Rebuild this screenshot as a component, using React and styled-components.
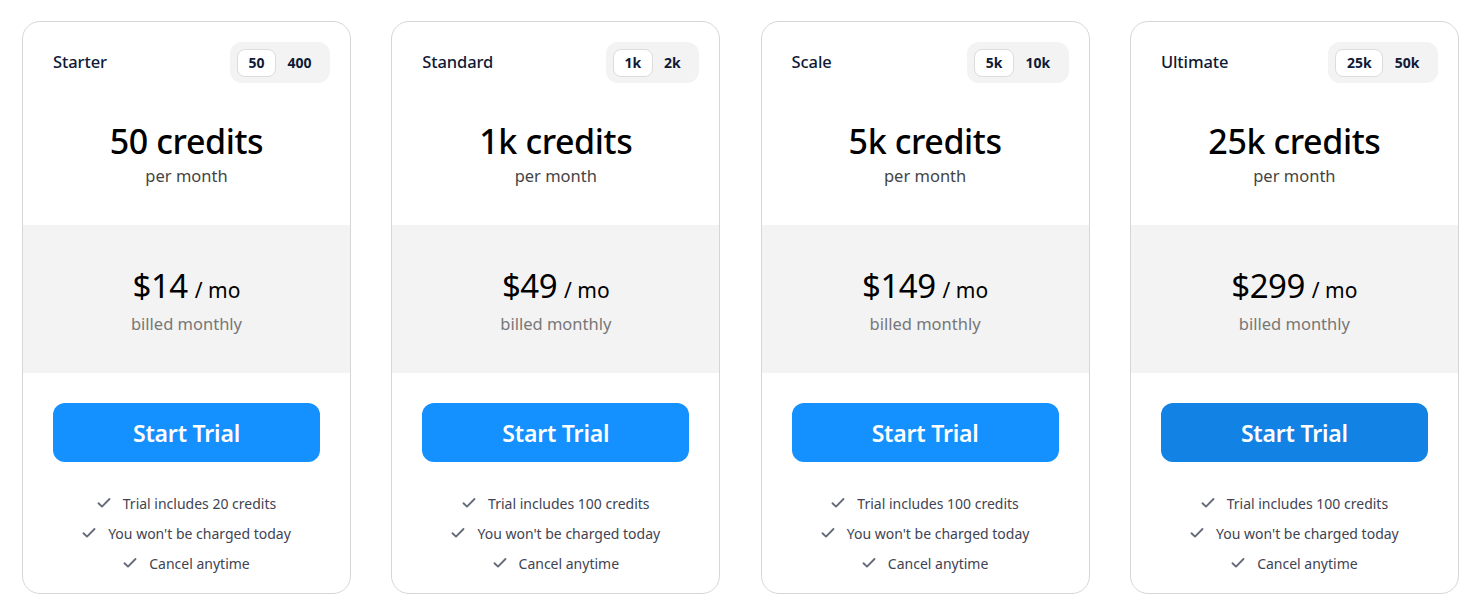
import React, { useState } from "react";
import styled, { createGlobalStyle } from "styled-components";

const Global = createGlobalStyle`
  html, body { margin: 0; padding: 0; background: #ffffff; }
  body { font-family: "Noto Sans", "Open Sans", sans-serif; }
  * { box-sizing: border-box; }
`;

const Page = styled.div`
  display: grid;
  grid-template-columns: repeat(4, 329px);
  column-gap: 40.3px;
  padding: 21px 0 0 22px;
`;

const Card = styled.div`
  border: 1px solid #d6d6d6;
  border-radius: 18px;
  overflow: hidden;
  background: #fff;
  display: flex;
  flex-direction: column;
  height: 573px;
`;

const Top = styled.div`
  padding: 20px 20px 37px 30px;
  display: flex;
  flex-direction: column;
`;

const Header = styled.div`
  display: flex;
  align-items: center;
  justify-content: space-between;
  height: 41px;
`;

const PlanName = styled.div`
  font-size: 16.5px;
  font-weight: 500;
  color: #0f1a36;
  letter-spacing: -0.1px;
  margin-top: -2px;
`;

const Toggle = styled.div`
  display: flex;
  align-items: center;
  background: #f3f3f3;
  border-radius: 12px;
  padding: 0 7px;
  height: 41px;
`;

const ToggleBtn = styled.button`
  height: 28px;
  padding: 0 10.5px;
  border-radius: 8px;
  border: 1px solid ${(p) => (p.$active ? "#dcdcdc" : "transparent")};
  background: ${(p) => (p.$active ? "#ffffff" : "transparent")};
  font-family: inherit;
  font-size: 14px;
  font-weight: 700;
  color: #0f1a36;
  cursor: pointer;
  display: flex;
  align-items: center;
  justify-content: center;
`;

const Credits = styled.div`
  margin-top: 38px;
  margin-right: 10px;
  text-align: center;
  font-size: 34px;
  font-weight: 500;
  line-height: 40px;
  color: #000;
  letter-spacing: -0.4px;
`;

const PerMonth = styled.div`
  margin-right: 10px;
  margin-top: 3px;
  text-align: center;
  font-size: 16.5px;
  line-height: 24px;
  color: #444;
`;

const PriceBand = styled.div`
  background: #f3f3f3;
  padding: 39px 0 37px;
  display: flex;
  flex-direction: column;
  align-items: center;
`;

const PriceLine = styled.div`
  display: flex;
  align-items: baseline;
  gap: 7px;
  line-height: 44px;
  color: #000;
`;

const Price = styled.span`
  font-size: 33px;
  font-weight: 400;
  letter-spacing: -0.5px;
`;

const Per = styled.span`
  font-size: 21px;
  font-weight: 400;
`;

const Billed = styled.div`
  text-align: center;
  font-size: 16.5px;
  line-height: 24px;
  color: #777;
`;

const Bottom = styled.div`
  padding: 30px 30px 0;
  display: flex;
  flex-direction: column;
`;

const TrialButton = styled.button`
  height: 59px;
  border: none;
  border-radius: 12px;
  background: ${(p) => (p.$hover ? "#1282e5" : "#1590ff")};
  color: #fff;
  font-family: inherit;
  font-size: 23px;
  font-weight: 600;
  cursor: pointer;
  letter-spacing: -0.2px;
  &:hover { background: #1282e5; }
`;

const Features = styled.ul`
  list-style: none;
  margin: 26px 0 0;
  padding: 0;
  display: flex;
  flex-direction: column;
  align-items: center;
`;

const Feature = styled.li`
  display: flex;
  align-items: center;
  gap: 12px;
  height: 30px;
  font-size: 14px;
  color: #3f4352;
`;

const CheckIcon = () => (
  <svg width="14" height="12" viewBox="0 0 14 12" fill="none">
    <path d="M1.5 6.2 L5 9.6 L12.5 2" stroke="#666b7b" strokeWidth="1.9" strokeLinecap="round" strokeLinejoin="round" />
  </svg>
);

const plans = [
  { name: "Starter", opts: ["50", "400"], credits: "50", price: "$14", trial: "20" },
  { name: "Standard", opts: ["1k", "2k"], credits: "1k", price: "$49", trial: "100" },
  { name: "Scale", opts: ["5k", "10k"], credits: "5k", price: "$149", trial: "100" },
  { name: "Ultimate", opts: ["25k", "50k"], credits: "25k", price: "$299", trial: "100", hover: true },
];

const PlanCard = ({ plan }) => {
  const [sel, setSel] = useState(0);
  return (
    <Card>
      <Top>
        <Header>
          <PlanName>{plan.name}</PlanName>
          <Toggle>
            {plan.opts.map((o, i) => (
              <ToggleBtn key={o} $active={sel === i} onClick={() => setSel(i)}>
                {o}
              </ToggleBtn>
            ))}
          </Toggle>
        </Header>
        <Credits>{plan.credits} credits</Credits>
        <PerMonth>per month</PerMonth>
      </Top>
      <PriceBand>
        <PriceLine>
          <Price>{plan.price}</Price>
          <Per>/ mo</Per>
        </PriceLine>
        <Billed>billed monthly</Billed>
      </PriceBand>
      <Bottom>
        <TrialButton $hover={plan.hover}>Start Trial</TrialButton>
        <Features>
          <Feature><CheckIcon />Trial includes {plan.trial} credits</Feature>
          <Feature><CheckIcon />You won't be charged today</Feature>
          <Feature><CheckIcon />Cancel anytime</Feature>
        </Features>
      </Bottom>
    </Card>
  );
};

export default function App() {
  return (
    <>
      <Global />
      <Page>
        {plans.map((p) => (
          <PlanCard key={p.name} plan={p} />
        ))}
      </Page>
    </>
  );
}
